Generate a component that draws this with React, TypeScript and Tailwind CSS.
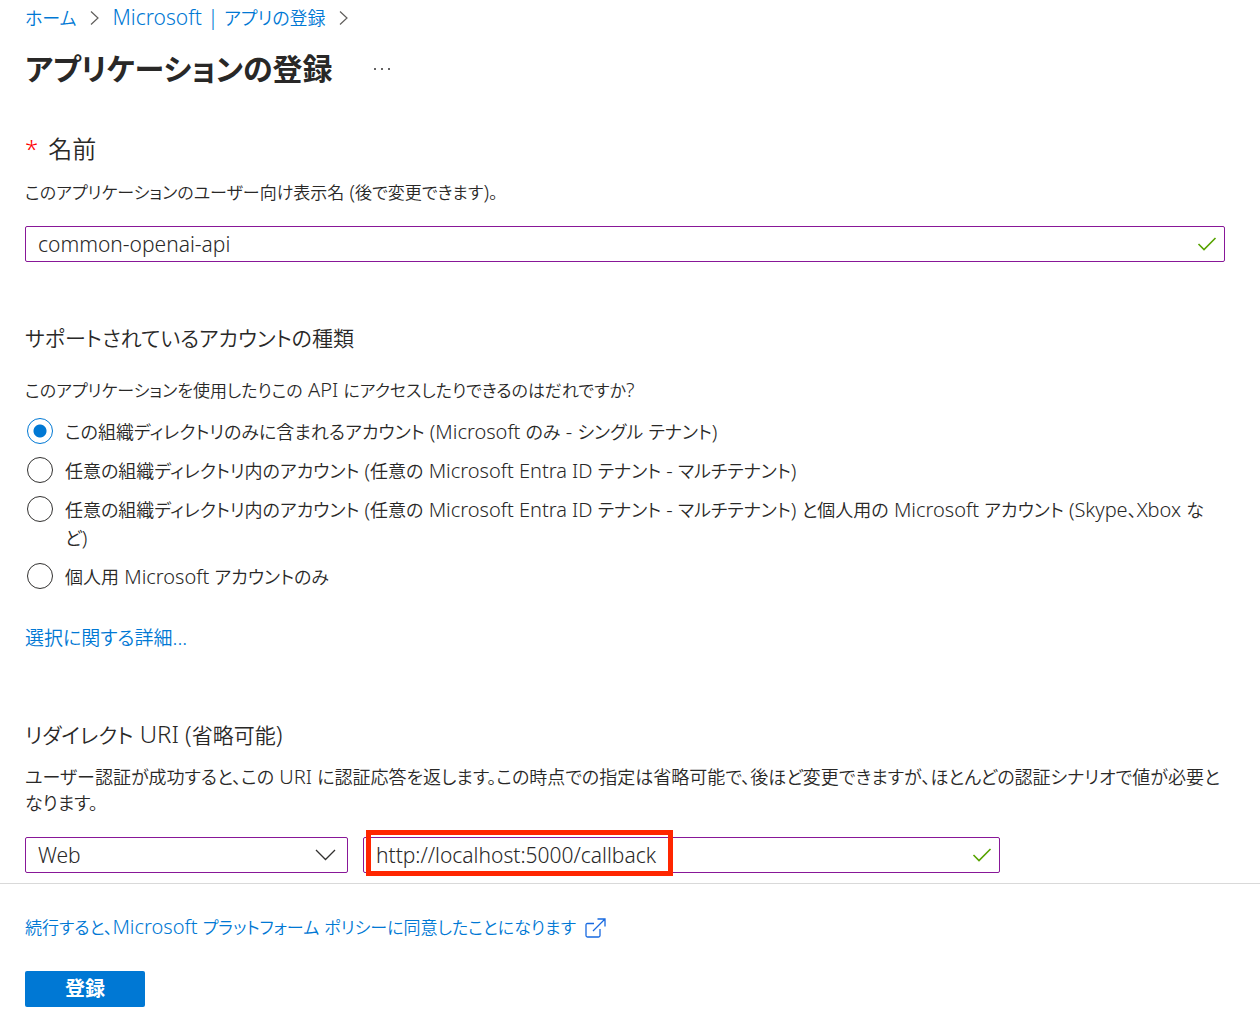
import { Fragment, useState } from "react";

const accountTypes = [
  { id: "single", label: "この組織ディレクトリのみに含まれるアカウント (Microsoft のみ - シングル テナント)" },
  { id: "multi", label: "任意の組織ディレクトリ内のアカウント (任意の Microsoft Entra ID テナント - マルチテナント)" },
  {
    id: "multi-personal",
    label:
      "任意の組織ディレクトリ内のアカウント (任意の Microsoft Entra ID テナント - マルチテナント) と個人用の Microsoft アカウント (Skype、Xbox など)",
  },
  { id: "personal", label: "個人用 Microsoft アカウントのみ" },
];

// Sets Latin runs a little larger so that they balance the Japanese around them.
function Mixed({ children, latin = "text-[20px]" }: { children: string; latin?: string }) {
  return (
    <>
      {children.split(/([\x20-\x7e]+)/).map((run, i) =>
        i % 2 ? (
          <span key={i} className={latin}>
            {run}
          </span>
        ) : (
          <Fragment key={i}>{run}</Fragment>
        ),
      )}
    </>
  );
}

function Separator() {
  return (
    <svg aria-hidden="true" width="10" height="16" viewBox="0 0 10 16" fill="none" stroke="#605e5c" strokeWidth="1.2">
      <path d="M1 1.5 8 8 1 14.5" />
    </svg>
  );
}

function ValidCheck() {
  return (
    <svg aria-hidden="true" className="pointer-events-none absolute right-2 top-1/2 -translate-y-1/2" width="20" height="16" viewBox="0 0 20 16" fill="none" stroke="#57a300" strokeWidth="1.6">
      <path d="M1.5 8 7 13.5 18.5 2" />
    </svg>
  );
}

function ExternalLink() {
  return (
    <svg aria-hidden="true" width="21" height="20" viewBox="0 0 21 20" fill="none" stroke="#1769e0" strokeWidth="1.3">
      <path d="M9 5.5H2.5Q1 5.5 1 7v10.500Q1 19 2.500 19H13.500Q15 19 15 17.500V11" />
      <path d="M8 13 19.500 1.500M12.500 1H20V8.500" />
    </svg>
  );
}

export default function App() {
  const [account, setAccount] = useState("single");
  const [name, setName] = useState("common-openai-api");
  const [uri, setUri] = useState("http://localhost:5000/callback");

  return (
    <div className="bg-white font-['Noto_Sans','Noto_Sans_CJK_JP',sans-serif] text-[18px] leading-[26px] font-[350] text-[#292827] [font-feature-settings:'palt']">
      <main className="pr-[35px] pb-[10px] pl-[25px]">
        <nav aria-label="階層リンク" className="flex items-center gap-[13px] pt-1 text-[#0078d4]">
          <a href="#home">ホーム</a>
          <Separator />
          <a href="#apps">
            <Mixed latin="text-[21px]">Microsoft | アプリの登録</Mixed>
          </a>
          <Separator />
        </nav>

        <div className="mt-[14px] flex items-center gap-[40px]">
          <h1 className="text-[30px] leading-[48px] font-bold">アプリケーションの登録</h1>
          <button type="button" aria-label="その他">
            <svg width="18" height="4" viewBox="0 0 18 4" fill="#323130">
              <circle cx="2" cy="2" r="1" />
              <circle cx="9" cy="2" r="1" />
              <circle cx="16" cy="2" r="1" />
            </svg>
          </button>
        </div>

        <section className="mt-10">
          <label htmlFor="app-name" className="flex gap-[10px] text-[24px] leading-8">
            <span className="text-[#ff0000]">*</span>名前
          </label>
          <p className="mt-[14px] text-[17px]">
            <Mixed>このアプリケーションのユーザー向け表示名 (後で変更できます)。</Mixed>
          </p>
          <div className="relative mt-5">
            <input id="app-name" value={name} onChange={(e) => setName(e.target.value)} className="block h-9 w-full rounded-[2px] border border-[#881798] pr-10 pl-3 text-[21px] outline-none" />
            <ValidCheck />
          </div>
        </section>

        <fieldset className="mt-15">
          <legend className="text-[21px] leading-8">サポートされているアカウントの種類</legend>
          <p className="mt-[23px] text-[17px]">
            <Mixed>このアプリケーションを使用したりこの API にアクセスしたりできるのはだれですか?</Mixed>
          </p>
          <div className="mt-[14px] flex flex-col gap-[11px] leading-[27px]">
            {accountTypes.map((type) => (
              <label key={type.id} className="flex items-start gap-3 pl-[2px]">
                <input
                  type="radio"
                  name="account"
                  checked={account === type.id}
                  onChange={() => setAccount(type.id)}
                  className="size-[26px] shrink-0 appearance-none rounded-full border border-[#323130] bg-white checked:border-[#0078d4] checked:bg-[radial-gradient(circle,#0078d4_6px,white_7px)]"
                />
                <span>
                  <Mixed>{type.label}</Mixed>
                </span>
              </label>
            ))}
          </div>
          <a href="#details" className="mt-[34px] inline-block text-[19px] text-[#0078d4]">
            <Mixed>選択に関する詳細...</Mixed>
          </a>
        </fieldset>

        <section className="mt-[67px]">
          <h2 className="text-[21px] leading-8">
            <Mixed latin="text-[24px]">リダイレクト URI (省略可能)</Mixed>
          </h2>
          <p className="mt-[13px]">
            <Mixed>
              ユーザー認証が成功すると、この URI に認証応答を返します。この時点での指定は省略可能で、後ほど変更できますが、ほとんどの認証シナリオで値が必要となります。
            </Mixed>
          </p>
          <div className="mt-[21px] grid w-[81.25%] grid-cols-[323fr_637fr] gap-[15px]">
            <div className="relative">
              <select aria-label="プラットフォーム" className="block h-9 w-full appearance-none rounded-[2px] border border-[#881798] bg-white px-3 text-[21px] outline-none">
                <option>Web</option>
              </select>
              <svg aria-hidden="true" className="pointer-events-none absolute top-1/2 right-3 -translate-y-1/2" width="21" height="12" viewBox="0 0 21 12" fill="none" stroke="#323130" strokeWidth="1.3">
                <path d="M1 1 10.500 10.500 20 1" />
              </svg>
            </div>
            <div className="relative">
              <input aria-label="リダイレクト URI" value={uri} onChange={(e) => setUri(e.target.value)} className="block h-9 w-full rounded-[2px] border border-[#881798] pr-10 pl-3 text-[21px] outline-none" />
              <div className="pointer-events-none absolute -top-[7px] left-[3px] h-[46px] w-[307px] border-[5px] border-[#ff2600]" />
              <ValidCheck />
            </div>
          </div>
        </section>
      </main>

      <footer className="border-t border-[#d9d9d9] px-[25px] pt-[30px] pb-[9px]">
        <a href="#policy" className="inline-flex items-center gap-[9px] text-[17px] text-[#0078d4]">
          <span>
            <Mixed>続行すると、Microsoft プラットフォーム ポリシーに同意したことになります</Mixed>
          </span>
          <ExternalLink />
        </a>
        <button type="button" className="mt-[30px] block h-9 w-[120px] rounded-[2px] bg-[#0078d4] text-[20px] font-bold text-white">登録</button>
      </footer>
    </div>
  );
}
